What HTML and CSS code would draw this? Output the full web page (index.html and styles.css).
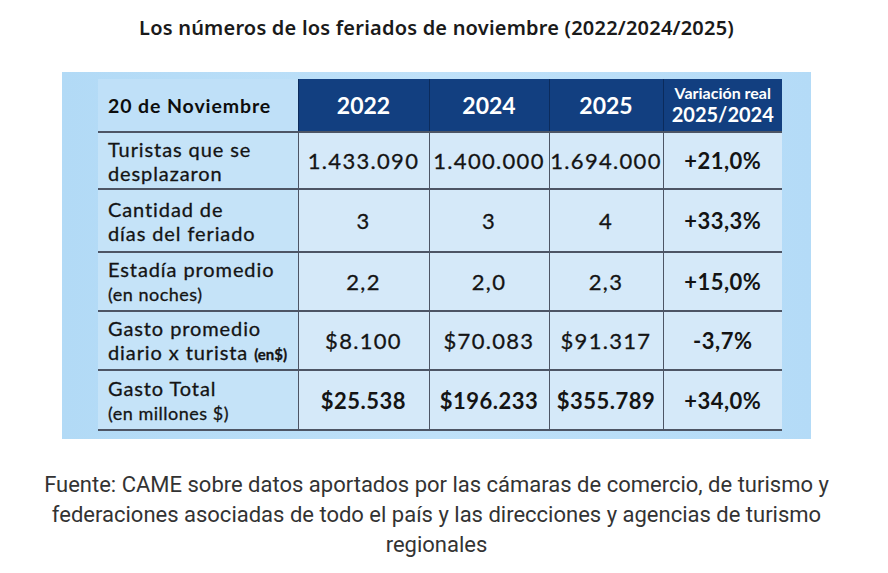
FILE: index.html
```html
<!DOCTYPE html>
<html lang="es">
<head>
<meta charset="utf-8">
<link rel="stylesheet" href="styles.css">
</head>
<body>
<div class="page">
  <h2 class="title">Los números de los feriados de noviembre (2022/2024/2025)</h2>
  <div class="panel">
    <table class="data">
      <colgroup>
        <col class="c-label"><col class="c-2022"><col class="c-2024"><col class="c-2025"><col class="c-var">
      </colgroup>
      <thead>
        <tr class="r-head">
          <th class="corner">20 de Noviembre</th>
          <th class="year">2022</th>
          <th class="year">2024</th>
          <th class="year">2025</th>
          <th class="year var"><span class="var-top">Variación real</span><span class="var-bot">2025/2024</span></th>
        </tr>
      </thead>
      <tbody>
        <tr class="r1">
          <td class="label">Turistas que se<br>desplazaron</td>
          <td>1.433.090</td><td>1.400.000</td><td>1.694.000</td><td class="pct">+21,0%</td>
        </tr>
        <tr class="r2">
          <td class="label">Cantidad de<br>días del feriado</td>
          <td>3</td><td>3</td><td>4</td><td class="pct">+33,3%</td>
        </tr>
        <tr class="r3">
          <td class="label">Estadía promedio<br><span class="small">(en noches)</span></td>
          <td>2,2</td><td>2,0</td><td>2,3</td><td class="pct">+15,0%</td>
        </tr>
        <tr class="r4">
          <td class="label">Gasto promedio<br>diario x turista <span class="tiny">(en$)</span></td>
          <td>$8.100</td><td>$70.083</td><td>$91.317</td><td class="pct">-3,7%</td>
        </tr>
        <tr class="r5">
          <td class="label">Gasto Total<br><span class="small">(en millones $)</span></td>
          <td class="bold">$25.538</td><td class="bold">$196.233</td><td class="bold">$355.789</td><td class="pct">+34,0%</td>
        </tr>
      </tbody>
    </table>
  </div>
  <p class="caption">Fuente: CAME sobre datos aportados por las cámaras de comercio, de turismo y federaciones asociadas de todo el país y las direcciones y agencias de turismo regionales</p>
</div>
</body>
</html>
```
FILE: styles.css
```css
html, body {
  margin: 0;
  padding: 0;
  background: #ffffff;
}

.page {
  width: 873px;
  display: flex;
  flex-direction: column;
  align-items: center;
}

.title {
  margin: 15px 0 0;
  font-family: "Noto Sans", sans-serif;
  font-weight: 600;
  font-size: 20px;
  letter-spacing: 0.2px;
  line-height: 26px;
  color: #1a1a1a;
  text-align: center;
}

.panel {
  margin-top: 31px;
  width: 749px;
  height: 367px;
  box-sizing: border-box;
  padding: 7px 29px 0 36px;
  background: linear-gradient(90deg, #b2daf6 0%, #bfe1f9 50%, #b4dbf7 100%);
}

.data {
  width: 684px;
  border-collapse: collapse;
  table-layout: fixed;
  font-family: "Lato", sans-serif;
  color: #141414;
}

.c-label { width: 200px; }
.c-2022 { width: 131px; }
.c-2024 { width: 120px; }
.c-2025 { width: 114px; }
.c-var { width: 119px; }

.r-head { height: 53px; }
.r1 { height: 57px; }
.r2 { height: 63px; }
.r3 { height: 59px; }
.r4 { height: 59px; }
.r5 { height: 60px; }

.data th, .data td {
  padding: 0;
  vertical-align: middle;
}

.corner {
  text-align: left;
  padding-left: 10px !important;
  font-weight: 700;
  font-size: 19.5px;
  letter-spacing: 0.9px;
  color: #0d0d0d;
  background: #bfe0f8;
  border-bottom: 2px solid #4d5565;
}

.year {
  background: #123f80;
  color: #ffffff;
  font-weight: 700;
  font-size: 23px;
  text-align: center;
  border-left: 1.5px solid #0b2b5c;
  border-bottom: 2px solid #4d5565;
}

.var {
  line-height: 1;
}

.var-top {
  display: block;
  font-size: 16px;
  margin-top: -2px;
}

.var-bot {
  display: block;
  font-size: 20px;
  margin-top: 3px;
}

.data td {
  background: #d5e9f9;
  text-align: center;
  font-size: 22px;
  letter-spacing: 1.3px;
  border-left: 1.5px solid #4d5565;
  border-bottom: 2px solid #4d5565;
  -webkit-text-stroke: 0.3px #141414;
}

.data td.label {
  background: #c5e3f8;
  border-left: none;
  text-align: left;
  padding-left: 10px;
  letter-spacing: 0.9px;
  font-size: 20px;
  line-height: 24px;
}

.data td.pct, .data td.bold {
  font-weight: 700;
  -webkit-text-stroke: 0;
  letter-spacing: 0.5px;
}

.small {
  font-size: 18px;
  letter-spacing: 0.5px;
}

.tiny {
  font-size: 15px;
  letter-spacing: 0;
  font-weight: 700;
}

.caption {
  margin: 31px 0 0;
  width: 800px;
  font-family: "Roboto", sans-serif;
  font-size: 22px;
  line-height: 30px;
  color: #333333;
  text-align: center;
}
```
